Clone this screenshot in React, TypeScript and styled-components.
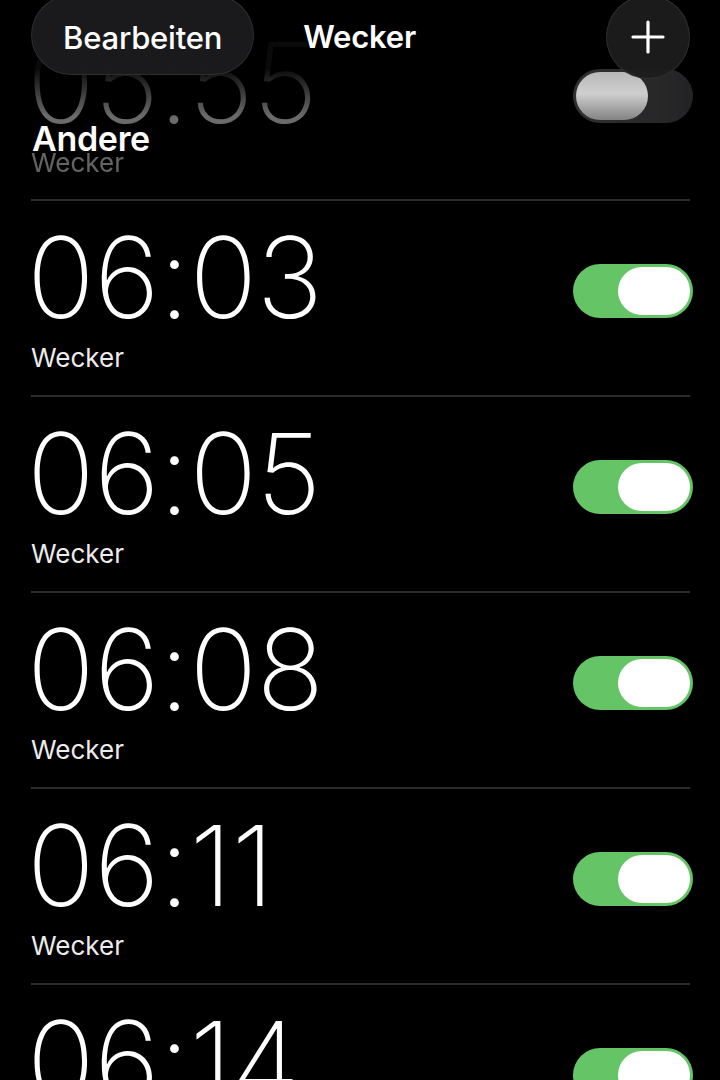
import React from 'react';
import styled, { createGlobalStyle } from 'styled-components';

const GlobalStyle = createGlobalStyle`
  html, body {
    margin: 0;
    padding: 0;
    background: #000;
  }
  body {
    font-family: Inter, 'Noto Sans', 'Liberation Sans', sans-serif;
    -webkit-font-smoothing: antialiased;
  }
`;

const Screen = styled.div`
  position: relative;
  width: 720px;
  height: 1080px;
  background: #000;
  overflow: hidden;
  color: #fff;
`;

const AlarmList = styled.div`
  display: flex;
  flex-direction: column;
  padding: 6px 27px 0 31px;
`;

const AlarmRow = styled.div<{ $faded?: boolean }>`
  height: 196px;
  box-sizing: border-box;
  display: flex;
  align-items: flex-start;
  justify-content: space-between;
  padding-top: 16px;
  margin-right: 3px;
  border-bottom: 2px solid #2c2c2e;
  ${(p) =>
    p.$faded &&
    `
    height: 195px;
    & > *:first-child {
      opacity: 0.42;
      -webkit-mask-image: linear-gradient(to bottom, rgba(0,0,0,0.1) 30%, #000 60%);
      mask-image: linear-gradient(to bottom, rgba(0,0,0,0.1) 30%, #000 60%);
    }
    & > *:last-child {
      opacity: 0.85;
    }
  `}
`;

const TimeBlock = styled.div`
  display: flex;
  flex-direction: column;
`;

const Time = styled.div`
  font-family: Inter, 'Roboto', sans-serif;
  font-weight: 200;
  font-size: 112px;
  line-height: 120px;
  letter-spacing: -0.5px;
  margin-left: -4px;
`;

const Label = styled.div`
  font-size: 26px;
  line-height: 32px;
  color: #ececec;
  margin-top: 5px;
`;

const Track = styled.div<{ $on: boolean }>`
  width: 120px;
  height: 54px;
  margin-top: 47px;
  margin-right: -3px;
  border-radius: 27px;
  background: ${(p) =>
    p.$on ? '#65c466' : 'linear-gradient(90deg, #3a3a3c 0%, #2a2a2c 100%)'};
  display: flex;
  align-items: center;
  justify-content: ${(p) => (p.$on ? 'flex-end' : 'flex-start')};
  padding: 0 3px;
  box-sizing: border-box;
`;

const Knob = styled.div<{ $on: boolean }>`
  width: 72px;
  height: 48px;
  border-radius: 24px;
  background: ${(p) =>
    p.$on ? '#fff' : 'linear-gradient(180deg, #d8d8d8 0%, #f4f4f4 45%, #9a9a9a 100%)'};
`;

const Header = styled.div`
  position: absolute;
  top: 0;
  left: 0;
  right: 0;
  height: 90px;
  display: flex;
  align-items: flex-start;
  padding: 0 30px 0 31px;
  box-sizing: border-box;
`;

const PillButton = styled.div`
  height: 80px;
  margin-top: -5px;
  padding: 4px 31px 0;
  border-radius: 40px;
  background: rgba(28, 28, 30, 0.94);
  border: 1px solid rgba(255, 255, 255, 0.09);
  display: flex;
  align-items: center;
  font-size: 31px;
  font-weight: 500;
  letter-spacing: -0.2px;
  box-sizing: border-box;
`;

const Title = styled.div`
  margin-left: 49px;
  margin-top: 18px;
  font-size: 31px;
  font-weight: 600;
  letter-spacing: -0.2px;
  flex: 1;
`;

const RoundButton = styled.div`
  width: 84px;
  height: 84px;
  margin-top: -5px;
  border-radius: 50%;
  background: rgba(28, 28, 30, 0.95);
  border: 1px solid rgba(255, 255, 255, 0.09);
  display: flex;
  align-items: center;
  justify-content: center;
  box-sizing: border-box;
`;

const SectionTitle = styled.div`
  position: absolute;
  top: 119px;
  left: 32px;
  font-size: 34px;
  line-height: 40px;
  font-weight: 600;
  letter-spacing: -0.3px;
`;

type Alarm = { time: string; on: boolean; faded?: boolean };

const alarms: Alarm[] = [
  { time: '05:55', on: false, faded: true },
  { time: '06:03', on: true },
  { time: '06:05', on: true },
  { time: '06:08', on: true },
  { time: '06:11', on: true },
  { time: '06:14', on: true },
];

const App: React.FC = () => {
  return (
    <Screen>
      <GlobalStyle />
      <AlarmList>
        {alarms.map((a) => (
          <AlarmRow key={a.time} $faded={a.faded}>
            <TimeBlock>
              <Time>{a.time}</Time>
              <Label>Wecker</Label>
            </TimeBlock>
            <Track $on={a.on}>
              <Knob $on={a.on} />
            </Track>
          </AlarmRow>
        ))}
      </AlarmList>
      <SectionTitle>Andere</SectionTitle>
      <Header>
        <PillButton>Bearbeiten</PillButton>
        <Title>Wecker</Title>
        <RoundButton>
          <svg width="36" height="36" viewBox="0 0 36 36">
            <path d="M18 3v30M3 18h30" stroke="#fff" strokeWidth="3.2" strokeLinecap="round" />
          </svg>
        </RoundButton>
      </Header>
    </Screen>
  );
};

export default App;
